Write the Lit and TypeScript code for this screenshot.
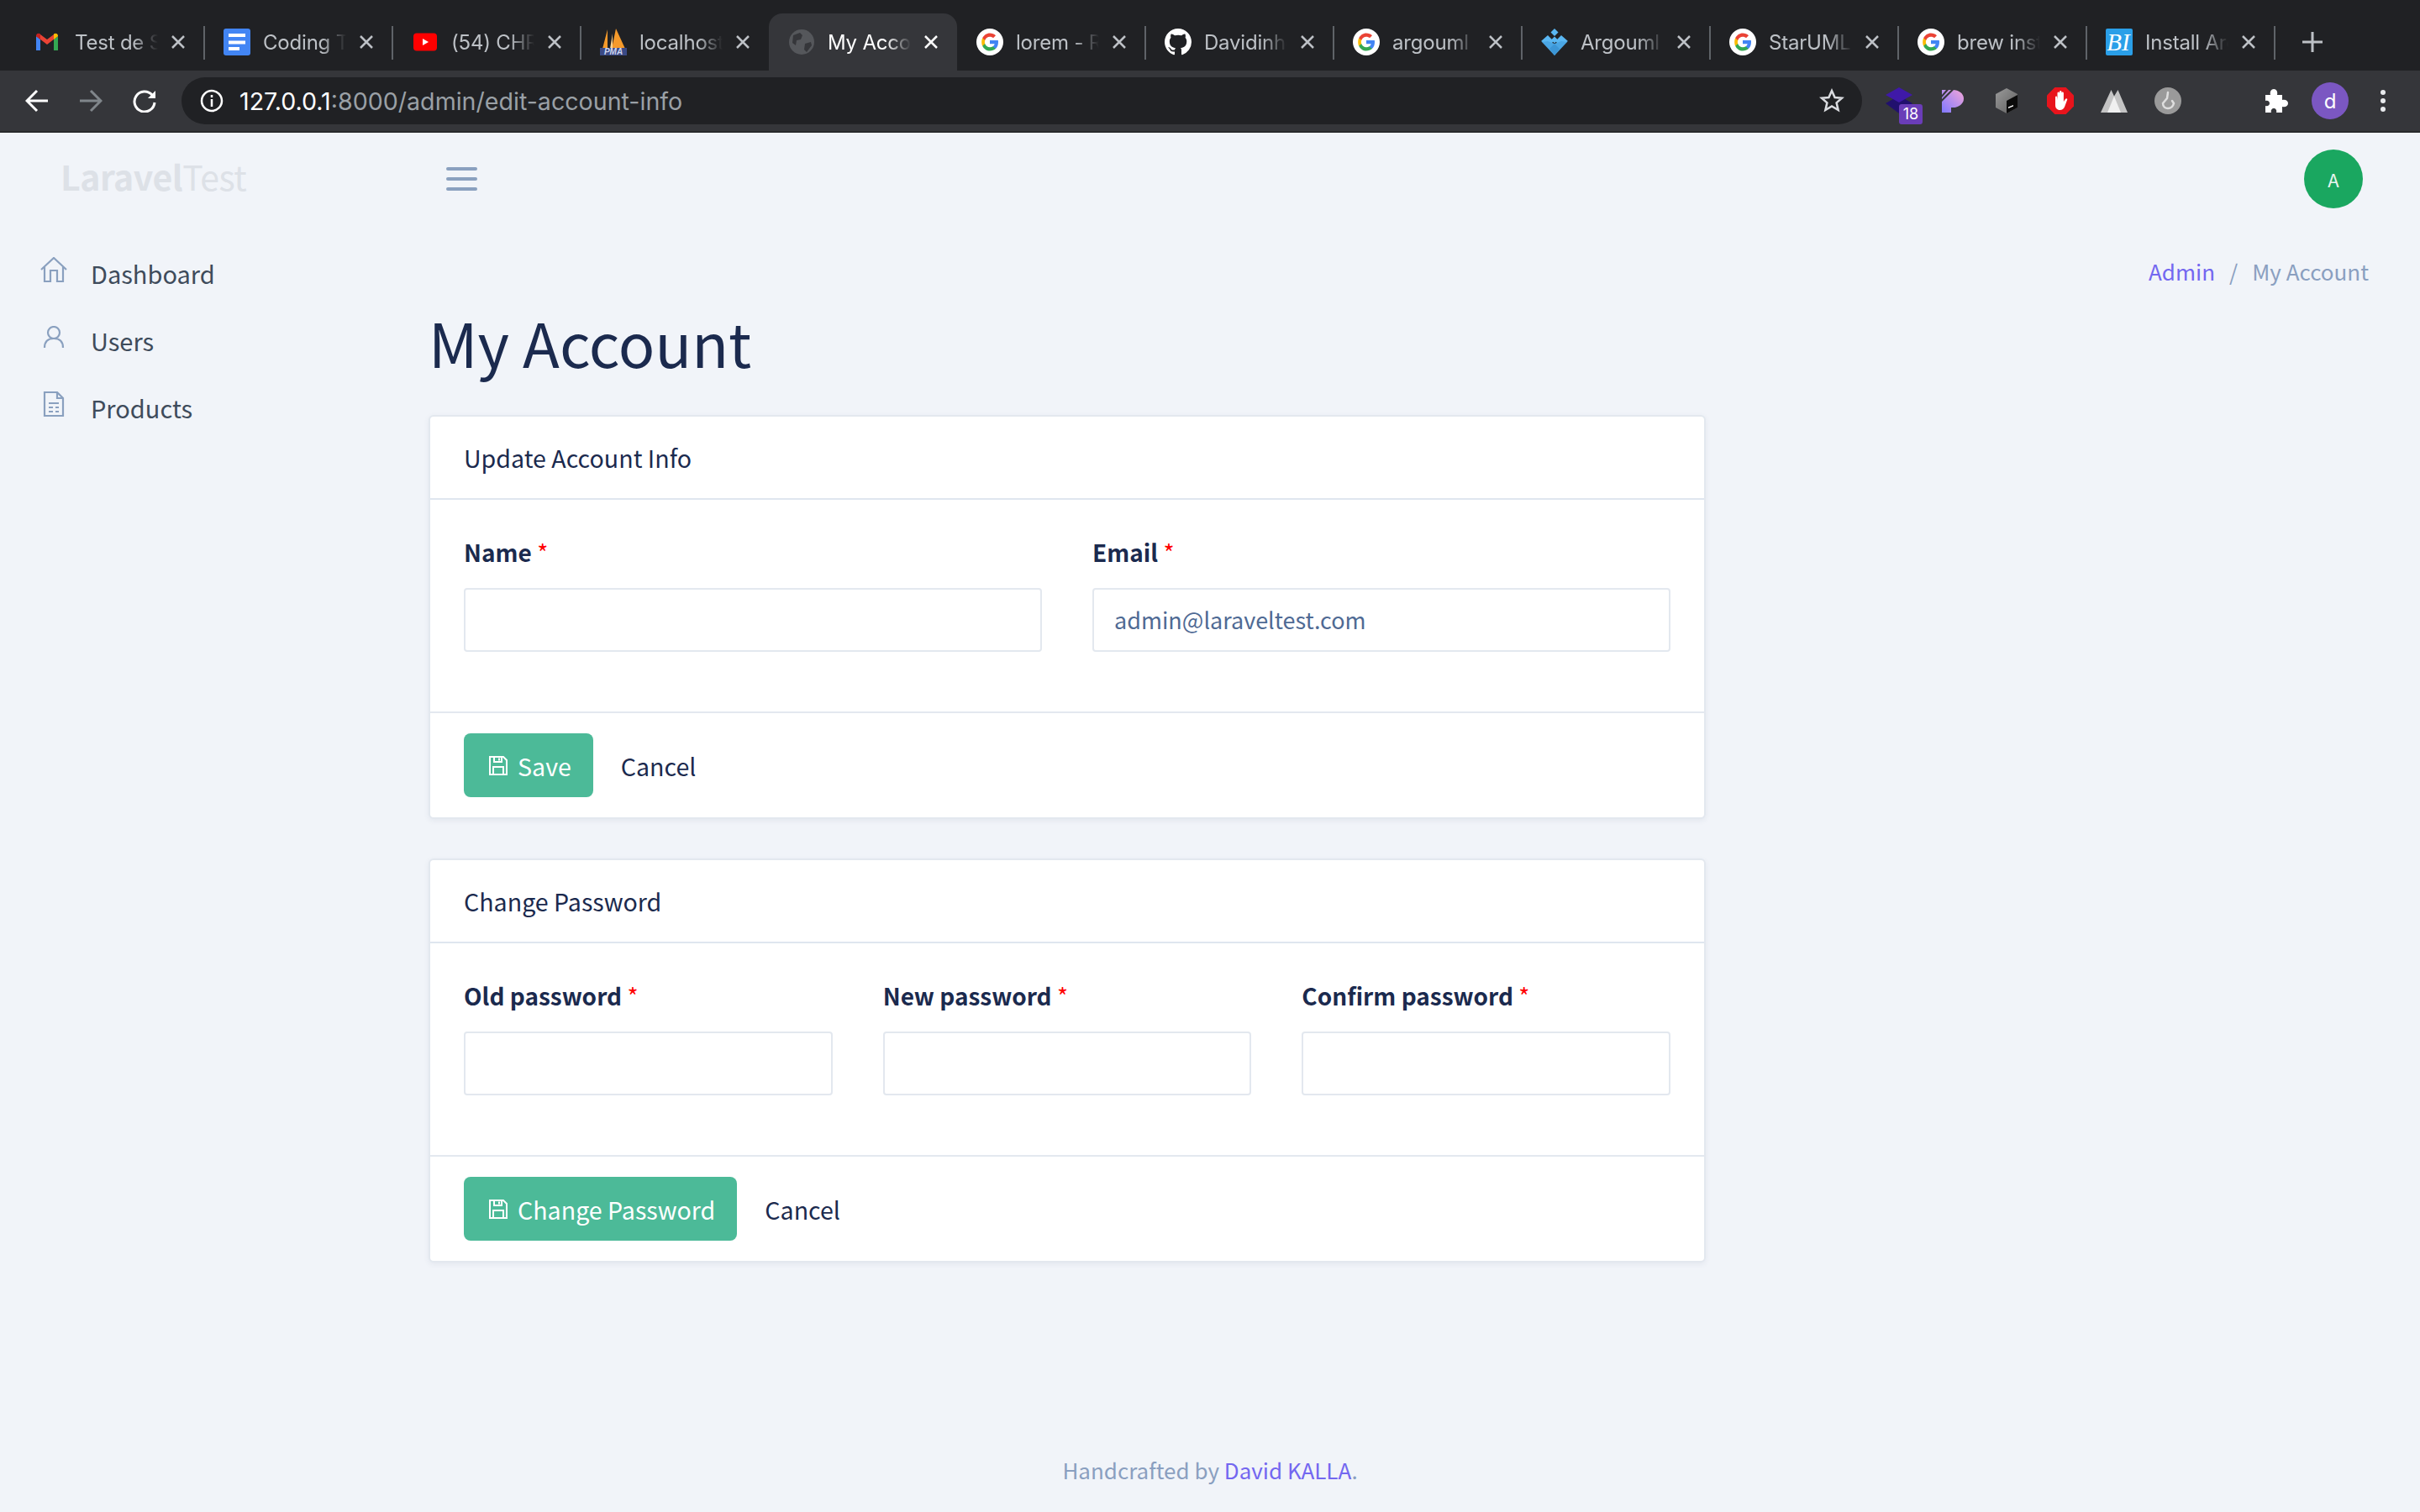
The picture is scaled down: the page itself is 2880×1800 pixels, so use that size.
import { LitElement, html, css, svg } from 'lit'
import { customElement } from 'lit/decorators.js'

const gIcon = svg`<svg viewBox="0 0 32 32" width="32" height="32"><circle cx="16" cy="16" r="16" fill="#fff"/>
  <path d="M26 16.300c0-.8-.1-1.500-.2-2.200H16v4.100h5.600c-.2 1.300-1 2.500-2.100 3.200v2.700h3.400c2-1.800 3.100-4.600 3.100-7.800z" fill="#4285f4"/>
  <path d="M16 26.500c2.800 0 5.200-.9 6.900-2.500l-3.400-2.700c-.9.600-2.100 1-3.500 1-2.700 0-5-1.800-5.800-4.300H7.200v2.700C8.900 24.200 12.200 26.500 16 26.500z" fill="#34a853"/>
  <path d="M10.200 18c-.2-.6-.3-1.300-.3-2s.1-1.400.3-2v-2.700H7.200C6.500 12.600 6.200 14.300 6.200 16s.3 3.400 1 4.700z" fill="#fbbc05"/>
  <path d="M16 9.700c1.500 0 2.900.5 4 1.500l3-3C21.200 6.500 18.800 5.500 16 5.500c-3.800 0-7.100 2.300-8.800 5.800l3 2.700c.8-2.500 3.100-4.300 5.800-4.300z" fill="#ea4335"/></svg>`

const gmail = svg`<svg viewBox="2 0 32 32" width="32" height="32">
  <path d="M3 9v17h5V13z" fill="#4285f4"/><path d="M24 13v13h5V9z" fill="#34a853"/>
  <path d="M3 9l13 10L29 9l-2-3-3 1-8 6-8-6-3-1z" fill="#ea4335"/><path d="M3 9c0-3 3-4 5-2.500V13z" fill="#c5221f"/><path d="M29 9c0-3-3-4-5-2.500V13z" fill="#fbbc04"/></svg>`

const docs = svg`<svg viewBox="0 0 32 32" width="32" height="32"><rect width="32" height="32" rx="3" fill="#4285f4"/>
  <rect x="6" y="6" width="20" height="4" fill="#fff"/><rect x="6" y="14.500" width="20" height="4" fill="#fff"/><rect x="6" y="22" width="13" height="4" fill="#fff"/></svg>`

const youtube = svg`<svg viewBox="0 0 32 32" width="32" height="32"><rect x="2" y="5.500" width="28" height="21" rx="4" fill="#f00"/><path d="M13 12l7 4-7 4z" fill="#fff"/></svg>`

const pma = svg`<svg viewBox="0 0 32 32" width="32" height="32">
  <path d="M9 1L3 24h6z" fill="#f59a2b"/><path d="M19 0l-5 24h16z" fill="#f59a2b"/><path d="M15 6l-3 18h3z" fill="#ffd28a"/>
  <rect x="0" y="23" width="32" height="9" fill="#3a4a86"/><text x="16" y="31" text-anchor="middle" font-size="10" font-weight="700" font-style="italic" font-family="Liberation Sans, sans-serif" fill="#cfd6ee">PMA</text></svg>`

const globe = svg`<svg viewBox="0 0 32 32" width="32" height="32"><circle cx="16" cy="16" r="15" fill="#55575b"/>
  <path d="M6 8l8-3 3 3-2 5-5 1-1 6-4-3zM20 18l7-2 1 4-6 8-3-3z" fill="#35363a"/></svg>`

const github = svg`<svg viewBox="0 0 16 16" width="32" height="32"><path fill="#fff" d="M8 0C3.580 0 0 3.580 0 8c0 3.540 2.290 6.530 5.470 7.590.4.070.55-.17.55-.38 0-.19-.01-.82-.01-1.490-2.010.37-2.530-.49-2.690-.94-.09-.23-.48-.94-.82-1.130-.28-.15-.68-.52-.01-.53.63-.01 1.080.58 1.230.82.72 1.210 1.870.87 2.330.66.070-.52.280-.87.510-1.070-1.780-.2-3.640-.89-3.640-3.950 0-.87.310-1.590.820-2.150-.08-.2-.36-1.020.08-2.120 0 0 .67-.21 2.200.82.640-.18 1.320-.27 2-.27s1.360.09 2 .27c1.530-1.040 2.200-.82 2.200-.82.44 1.100.16 1.920.08 2.120.51.560.82 1.270.82 2.150 0 3.070-1.870 3.750-3.650 3.950.29.25.54.73.54 1.480 0 1.070-.01 1.930-.01 2.200 0 .21.150.46.550.38A8.010 8.010 0 0 0 16 8c0-4.420-3.580-8-8-8z"/></svg>`

const argo = svg`<svg viewBox="0 0 32 32" width="32" height="32">
  <path d="M16 0l4.500 4.500L16 9l-4.500-4.500z" fill="#5ab7f2"/>
  <path d="M16 9.500l4 4-4 4-4-4z" fill="#5ab7f2"/>
  <path d="M8 8l7 7-3 3-1 4-11-7z" fill="#5ab7f2"/><path d="M24 8l-7 7 3 3 1 4 11-7z" fill="#5ab7f2"/>
  <path d="M16 18l8-3 7 1-15 16L1 16l7-1z" fill="#4aa6e4"/><path d="M16 18l6 6-6 8-6-8z" fill="#3c96d6"/></svg>`

const bootstrapTile = svg`<svg viewBox="0 0 32 32" width="32" height="32"><rect width="32" height="32" rx="2" fill="#2a9fe8"/>
  <text x="15" y="26" text-anchor="middle" font-size="29" font-style="italic" font-family="Liberation Serif, serif" fill="#fff">BI</text></svg>`

const save = svg`<svg viewBox="0 0 22 23" width="22" height="23" fill="none" stroke="currentColor" stroke-width="2"><path d="M1 1h16l4 4v17H1z"/><path d="M6 1v6h9V1M12 2.500v3M5 22v-9h12v9"/></svg>`

type Tab = { icon: unknown; title: string; active?: boolean }

const tabs: Tab[] = [
  { icon: gmail, title: 'Test de Sécurité' },
  { icon: docs, title: 'Coding Tests' },
  { icon: youtube, title: '(54) CHRIS' },
  { icon: pma, title: 'localhost / 127' },
  { icon: globe, title: 'My Account', active: true },
  { icon: gIcon, title: 'lorem - Recherche' },
  { icon: github, title: 'Davidinho' },
  { icon: gIcon, title: 'argouml - Google' },
  { icon: argo, title: 'Argouml' },
  { icon: gIcon, title: 'StarUML - Google' },
  { icon: gIcon, title: 'brew install' },
  { icon: bootstrapTile, title: 'Install ArgoUML' },
]

@customElement('browser-chrome')
export class BrowserChrome extends LitElement {
  static styles = css`
    :host {
      display: block;
      font-family: Inter, 'Liberation Sans', sans-serif;
    }

    .strip {
      height: 84px;
      box-sizing: border-box;
      padding: 16px 0 0 19px;
      background: #202124;
      display: flex;
      align-items: stretch;
    }

    .tab {
      width: 224px;
      box-sizing: border-box;
      padding: 0 22px 0 23px;
      display: flex;
      align-items: center;
      gap: 15px;
      color: #bdc1c6;
      position: relative;
    }

    .tab svg {
      flex: none;
      display: block;
    }

    .tab::after {
      content: '';
      position: absolute;
      right: -1px;
      top: 15px;
      height: 40px;
      width: 2px;
      background: #5f6368;
    }

    .tab.no-sep::after {
      display: none;
    }

    .tab.active {
      background: #35363a;
      color: #fff;
      border-radius: 16px 16px 0 0;
    }

    .title {
      flex: 1;
      min-width: 0;
      overflow: hidden;
      white-space: nowrap;
      font-size: 24px;
      letter-spacing: -0.2px;
      -webkit-mask-image: linear-gradient(90deg, #000 70%, transparent 100%);
      mask-image: linear-gradient(90deg, #000 70%, transparent 100%);
    }

    .close {
      flex: none;
      width: 18px;
      height: 18px;
      stroke: currentColor;
      stroke-width: 2.500;
    }

    .new {
      margin-left: 33px;
      align-self: center;
      width: 24px;
      height: 24px;
      stroke: #bdc1c6;
      stroke-width: 3;
    }

    .toolbar {
      height: 72px;
      background: #35363a;
      display: flex;
      align-items: center;
      border-bottom: 2px solid #28292c;
    }

    .nav {
      width: 64px;
      display: flex;
      justify-content: center;
      flex: none;
    }

    .nav:first-child {
      margin-left: 12px;
    }

    .omni {
      width: 2000px;
      height: 56px;
      margin-left: 12px;
      background: #202124;
      border-radius: 28px;
      display: flex;
      align-items: center;
      box-sizing: border-box;
      padding: 0 21px 0 22px;
      flex: none;
    }

    .url {
      margin-left: 19px;
      flex: 1;
      font-size: 28.6px;
      color: #9aa0a6;
      white-space: nowrap;
    }

    .url b {
      font-weight: 400;
      color: #fff;
    }

    .exts {
      display: flex;
      align-items: center;
      margin-left: 12px;
    }

    .ext {
      width: 64px;
      height: 72px;
      display: flex;
      align-items: center;
      justify-content: center;
      flex: none;
      position: relative;
    }

    .badge {
      position: absolute;
      left: 32px;
      top: 40px;
      width: 28px;
      height: 24px;
      background: #6a3db8;
      border-radius: 3px;
      color: #fff;
      font-size: 18px;
      text-align: center;
      line-height: 24px;
    }

    .puzzle {
      margin-left: 65px;
    }

    .me {
      width: 44px;
      height: 44px;
      border-radius: 50%;
      background: #7b57c2;
      color: #fff;
      font-size: 24px;
      display: flex;
      align-items: center;
      justify-content: center;
      margin: 0 10px;
      flex: none;
    }

    .dots {
      margin-left: 28px;
      flex: none;
    }
  `

  render() {
    return html`
      <div class="strip">
        ${tabs.map((t, i) => html`
          <div class="tab ${t.active ? 'active' : ''} ${t.active || tabs[i + 1]?.active ? 'no-sep' : ''}">
            ${t.icon}
            <span class="title">${t.title}</span>
            <svg class="close" viewBox="0 0 18 18"><path d="M2 2l14 14M16 2L2 16"/></svg>
          </div>
        `)}
        <svg class="new" viewBox="0 0 24 24"><path d="M12 0v24M0 12h24"/></svg>
      </div>
      <div class="toolbar">
        <div class="nav"><svg viewBox="0 0 28 28" width="28" height="28" fill="none" stroke="#fff" stroke-width="3"><path d="M27 14H3M14 2L2 14l12 12"/></svg></div>
        <div class="nav"><svg viewBox="0 0 28 28" width="28" height="28" fill="none" stroke="#80868b" stroke-width="3"><path d="M1 14h24M14 2l12 12-12 12"/></svg></div>
        <div class="nav"><svg viewBox="0 0 28 28" width="28" height="28" fill="none" stroke="#fff" stroke-width="3"><path d="M23 7a12 12 0 1 0 3 9"/><path d="M27 2v9h-9z" fill="#fff" stroke="none"/></svg></div>
        <div class="omni">
          <svg viewBox="0 0 28 28" width="28" height="28" fill="none" stroke="#fff" stroke-width="2.500"><circle cx="14" cy="14" r="12"/><path d="M14 12v9M14 7v3"/></svg>
          <span class="url"><b>127.0.0.1</b>:8000/admin/edit-account-info</span>
          <svg viewBox="0 0 30 30" width="30" height="30" fill="none" stroke="#dadce0" stroke-width="2.500"><path d="M15 3l3.600 8 8.400.8-6.400 5.600 2 8.600-7.600-4.500L7.400 26l2-8.600L3 11.800l8.400-.8z"/></svg>
        </div>
        <div class="exts">
          <div class="ext">
            <svg viewBox="0 0 32 32" width="32" height="32"><path d="M0 19l16-9 16 9-16 12z" fill="#21106e"/><path d="M0 9l16-9 16 9-16 9z" fill="#3f19a8"/></svg>
            <span class="badge">18</span>
          </div>
          <div class="ext"><svg viewBox="0 0 26 27" width="26" height="27"><defs><linearGradient id="p" x1="0" y1="1" x2="1" y2="0"><stop offset="0" stop-color="#7f78ff"/><stop offset="1" stop-color="#f3a6d8"/></linearGradient></defs><path d="M0 0h13a13 10.500 0 0 1 0 21H11v6H0z" fill="url(#p)"/><path d="M5 0h3L0 9V6zM11 0h3L0 14v-3z" fill="#35363a"/></svg></div>
          <div class="ext"><svg viewBox="0 0 26 30" width="26" height="30"><defs><linearGradient id="c" x1="0" y1="0" x2="1" y2="1"><stop offset="0" stop-color="#9a9a9a"/><stop offset="1" stop-color="#5e5e5e"/></linearGradient></defs><path d="M13 0l13 7v16l-13 7-13-7V7z" fill="url(#c)"/><path d="M13 15l13-7v15l-13 7z" fill="#0b0b0b"/><path d="M15 24l6-2.500v-1.500l-6 2.500z" fill="#fff"/></svg></div>
          <div class="ext"><svg viewBox="0 0 32 32" width="32" height="32"><path d="M9.400 0h13.200L32 9.400v13.200L22.600 32H9.400L0 22.600V9.400z" fill="#e8141c"/><path d="M10 12c0-2 2-2 2.200 0l.3 3V7c0-2 2.300-2 2.500 0v7V5.500c0-2 2.500-2 2.500 0V14V7c0-2 2.400-2 2.400 0v10l2-3c1.200-1.600 3-.6 2.200 1l-3 8c-1 2.500-3 4-5.600 4-3.500 0-5.500-2.500-5.500-6z" fill="#fff"/></svg></div>
          <div class="ext"><svg viewBox="0 0 32 27" width="32" height="27"><path d="M0 27L12.500 0 16 7.500 20.500 0 32 27z" fill="#c4c4c4"/><path d="M8 27l8-19.500L24 27z" fill="#f0f0f0"/></svg></div>
          <div class="ext"><svg viewBox="0 0 32 32" width="32" height="32"><circle cx="16" cy="16" r="16" fill="#9a9a9a"/><path d="M16 6l-1 7-5 6c0 4 3 6 6 6s6-2 7-6l-2-3" fill="none" stroke="#dedede" stroke-width="2.500" stroke-linecap="round"/></svg></div>
          <div class="ext puzzle"><svg viewBox="0 0 30 30" width="30" height="30"><path d="M2 8h6c-1-4 1-7 4-7s5 3 4 7h6v6c4-1 7 1 7 4s-3 5-7 4v7H15c1-3-1-5-3-5s-4 2-3 5H2v-8c3 1 5-1 5-3s-2-4-5-3z" fill="#fff"/></svg></div>
          <div class="me">d</div>
          <svg class="dots" viewBox="0 0 6 26" width="6" height="26" fill="#e8eaed"><circle cx="3" cy="3" r="3"/><circle cx="3" cy="13" r="3"/><circle cx="3" cy="23" r="3"/></svg>
        </div>
      </div>
    `
  }
}

@customElement('app-root')
export class AppRoot extends LitElement {
  static styles = css`
    :host {
      display: block;
      width: 2880px;
      height: 1800px;
      overflow: hidden;
      background: #f1f4f9;
      color: #1b2a4e;
      font-family: 'Noto Sans CJK JP', 'Open Sans', sans-serif;
      font-size: 28.6px;
    }

    .page {
      height: 1642px;
      display: flex;
      flex-direction: column;
    }

    .body {
      flex: 1;
      display: grid;
      grid-template-columns: 510px 1520px;
    }

    .brand {
      margin: 21px 0 0 72px;
      height: 60px;
      line-height: 60px;
      font-size: 41px;
      color: #dde1e7;
      letter-spacing: -0.5px;
    }

    .brand b {
      font-weight: 700;
    }

    .side-nav {
      margin-top: 46px;
      display: flex;
      flex-direction: column;
    }

    .side-item {
      height: 80px;
      display: flex;
      align-items: center;
      padding-left: 48px;
      color: #3e4b5b;
      font-size: 29px;
    }

    .side-item .slot {
      width: 60px;
      display: flex;
      flex: none;
      margin-bottom: 8px;
    }

    .side-item svg {
      stroke: #8aa0bf;
      fill: none;
      stroke-width: 2.200;
    }

    .topbar {
      height: 110px;
      display: flex;
      align-items: center;
      justify-content: space-between;
      margin-right: -782px;
    }

    .burger {
      margin-left: 21px;
      display: flex;
      flex-direction: column;
      gap: 8px;
      width: 37px;
    }

    .burger span {
      height: 4px;
      border-radius: 2px;
      background: #8aa0bf;
    }

    .avatar {
      width: 70px;
      height: 70px;
      border-radius: 50%;
      background: #1aa760;
      color: #e8f5ee;
      font-size: 22px;
      display: flex;
      align-items: center;
      justify-content: center;
    }

    .crumbs {
      display: flex;
      justify-content: flex-end;
      margin-right: -789px;
      height: 44px;
      line-height: 44px;
      margin-top: 33px;
      gap: 17px;
      color: #8a9fc0;
      font-size: 26px;
    }

    .crumbs a, footer a {
      color: #7367f0;
    }

    h1 {
      margin: 10px 0 35px;
      font-size: 72px;
      font-weight: 400;
      line-height: 104px;
      color: #1b2a4e;
    }

    .card {
      background: #fff;
      border: 2px solid #e3e8ef;
      border-radius: 6px;
      box-shadow: 0 2px 6px rgba(60, 80, 120, 0.08);
      margin-bottom: 47px;
    }

    .card-head {
      height: 97px;
      padding: 0 40px;
      display: flex;
      align-items: center;
      border-bottom: 2px solid #dfe6ef;
    }

    .card-body {
      padding: 40px 40px 0;
      height: 212px;
      display: grid;
      gap: 60px;
    }

    .two { grid-template-columns: 1fr 1fr; }
    .three { grid-template-columns: 1fr 1fr 1fr; }

    label {
      display: block;
      font-weight: 700;
      font-size: 28px;
      height: 44px;
      line-height: 44px;
      margin-bottom: 21px;
    }

    label i {
      font-style: normal;
      color: #f00;
      font-weight: 400;
    }

    .input {
      height: 72px;
      border: 2px solid #e3e8ef;
      border-radius: 4px;
      padding: 0 24px;
      line-height: 72px;
      font-size: 27px;
      color: #4f6a94;
    }

    .card-foot {
      border-top: 2px solid #e3e8ef;
      height: 76px;
      padding: 24px 40px;
      display: flex;
      align-items: center;
      gap: 33px;
    }

    .btn {
      height: 76px;
      box-sizing: border-box;
      padding: 0 26px 0 30px;
      border-radius: 8px;
      background: #4cba98;
      color: #fff;
      display: flex;
      align-items: center;
      gap: 12px;
    }

    footer {
      height: 100px;
      line-height: 100px;
      text-align: center;
      color: #8a9fc0;
      font-size: 26px;
    }
  `

  private field(name: string, value = '') {
    return html`<div><label>${name} <i>*</i></label><div class="input">${value}</div></div>`
  }

  render() {
    return html`
      <browser-chrome></browser-chrome>
      <div class="page">
        <div class="body">
          <aside>
            <div class="brand"><b>Laravel</b>Test</div>
            <nav class="side-nav">
              <div class="side-item"><span class="slot"><svg viewBox="0 0 32 30" width="32" height="30"><path d="M1 15L16 1l15 14M5 12v17h7V16h8v13h7V12"/></svg></span>Dashboard</div>
              <div class="side-item"><span class="slot"><svg viewBox="0 0 32 26" width="32" height="26"><circle cx="16" cy="8" r="7"/><path d="M5 26c0-7 4-11 11-11s11 4 11 11"/></svg></span>Users</div>
              <div class="side-item"><span class="slot"><svg viewBox="0 0 32 30" width="32" height="30"><path d="M5 1h15l7 7v21H5zM20 1v7h7M10 14h12M10 19h5M18 19h4M10 24h5M18 24h4"/></svg></span>Products</div>
            </nav>
          </aside>
          <main>
            <div class="topbar">
              <div class="burger"><span></span><span></span><span></span></div>
              <div class="avatar">A</div>
            </div>
            <div class="crumbs"><a>Admin</a><span>/</span><span>My Account</span></div>
            <h1>My Account</h1>
            <section class="card">
              <div class="card-head">Update Account Info</div>
              <div class="card-body two">${this.field('Name')}${this.field('Email', 'admin@laraveltest.com')}</div>
              <div class="card-foot"><div class="btn">${save}Save</div><span>Cancel</span></div>
            </section>
            <section class="card">
              <div class="card-head">Change Password</div>
              <div class="card-body three">${this.field('Old password')}${this.field('New password')}${this.field('Confirm password')}</div>
              <div class="card-foot"><div class="btn">${save}Change Password</div><span>Cancel</span></div>
            </section>
          </main>
        </div>
        <footer>Handcrafted by <a>David KALLA</a>.</footer>
      </div>
    `
  }
}
